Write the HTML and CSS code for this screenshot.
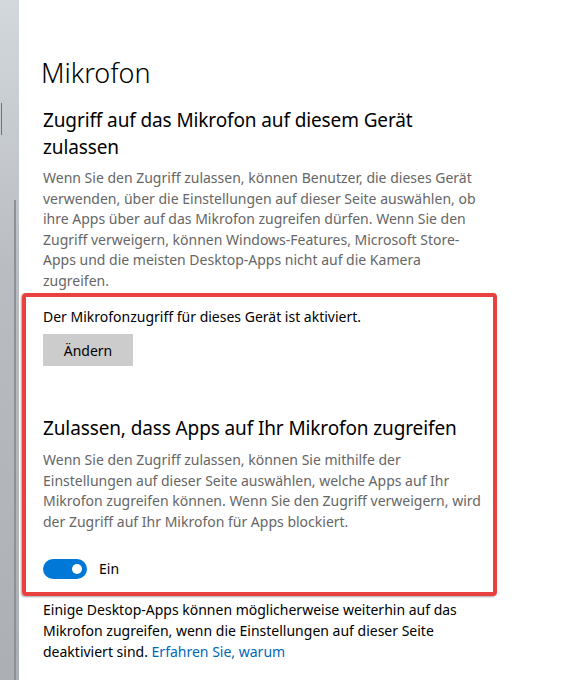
FILE: index.html
```html
<!DOCTYPE html>
<html lang="de">
<head>
    <meta charset="UTF-8">
    <meta name="viewport" content="width=device-width, initial-scale=1.0">
    <title>Mikrofon</title>
    <link rel="stylesheet" href="styles.css">
</head>
<body>
    <div class="sidebar">
        <div class="search-edge"></div>
        <div class="scroll-line"></div>
    </div>
    <div class="page">
        <h1>Mikrofon</h1>
        <h2>Zugriff auf das Mikrofon auf diesem Gerät zulassen</h2>
        <p class="desc">Wenn Sie den Zugriff zulassen, können Benutzer, die dieses Gerät verwenden, über die Einstellungen auf dieser Seite auswählen, ob ihre Apps über auf das Mikrofon zugreifen dürfen. Wenn Sie den Zugriff verweigern, können Windows-Features, Microsoft Store-Apps und die meisten Desktop-Apps nicht auf die Kamera zugreifen.</p>

        <div class="highlight">
            <div class="status">Der Mikrofonzugriff für dieses Gerät ist aktiviert.</div>
            <button class="change-button">Ändern</button>

            <h2 class="apps-title">Zulassen, dass Apps auf Ihr Mikrofon zugreifen</h2>
            <p class="desc">Wenn Sie den Zugriff zulassen, können Sie mithilfe der Einstellungen auf dieser Seite auswählen, welche Apps auf Ihr Mikrofon zugreifen können. Wenn Sie den Zugriff verweigern, wird der Zugriff auf Ihr Mikrofon für Apps blockiert.</p>

            <div class="toggle-row">
                <span class="toggle"><span class="knob"></span></span>
                <span class="toggle-label">Ein</span>
            </div>
        </div>

        <p class="note">Einige Desktop-Apps können möglicherweise weiterhin auf das Mikrofon zugreifen, wenn die Einstellungen auf dieser Seite deaktiviert sind. <a href="#">Erfahren Sie, warum</a></p>
    </div>
</body>
</html>
```

FILE: styles.css
```css
body {
    margin: 0;
    height: 680px;
    display: flex;
    background-color: white;
    font-family: "Noto Sans", "Open Sans", sans-serif;
    color: #000;
    overflow: hidden;
}
.sidebar {
    width: 19px;
    flex-shrink: 0;
    display: flex;
    flex-direction: column;
    padding-top: 103px;
    box-sizing: border-box;
    background: linear-gradient(to bottom, #d3d8dc, #b9bdc1 40%, #acb0b4);
}
.search-edge {
    width: 2px;
    height: 32px;
    border-right: 1px solid #6f7378;
    box-sizing: border-box;
}
.scroll-line {
    margin: 65px 0 0 14px;
    width: 2px;
    flex: 1;
    background-color: #8d9195;
}
.page {
    padding: 0 0 0 22px;
    width: 478px;
}
h1 {
    font-weight: 300;
    font-size: 27px;
    margin: 54px 0 0 0;
    line-height: 38px;
}
h2 {
    font-weight: 400;
    font-size: 19px;
    letter-spacing: -0.12px;
    line-height: 27px;
    margin: 15px 0 0 2px;
    width: 400px;
}
.desc {
    color: #666;
    font-size: 14px;
    line-height: 20.5px;
    margin: 7px 0 0 2px;
    width: 434px;
}
.highlight {
    margin: 2px 0 0 -19px;
    border: 4px solid #e9413f;
    border-radius: 4px;
    padding: 10px 17px 13px 17px;
    width: 433px;
    box-shadow: -1px 1px 2px rgba(0,0,0,0.35);
}
.highlight .desc {
    margin: 8px 0 0 0;
    width: 440px;
}
.status {
    font-size: 14px;
    line-height: 20px;
}
.change-button {
    display: block;
    margin-top: 7px;
    width: 90px;
    height: 32px;
    border: none;
    background-color: #cccccc;
    font-family: inherit;
    font-size: 14px;
    color: #000;
    padding: 0;
}
.apps-title {
    margin: 49px 0 0 0;
    width: 440px;
}
.toggle-row {
    display: flex;
    align-items: center;
    gap: 12px;
    margin-top: 27px;
    height: 20px;
}
.toggle {
    width: 44px;
    height: 20px;
    border-radius: 10px;
    background-color: #0078d7;
    display: flex;
    align-items: center;
    justify-content: flex-end;
    padding-right: 5px;
    box-sizing: border-box;
}
.knob {
    width: 10px;
    height: 10px;
    border-radius: 50%;
    background-color: white;
}
.toggle-label {
    font-size: 14px;
    line-height: 20px;
}
.note {
    font-size: 14px;
    line-height: 21px;
    margin: 3px 0 0 2px;
    width: 440px;
}
.note a {
    color: #0067b8;
    text-decoration: none;
}
```
